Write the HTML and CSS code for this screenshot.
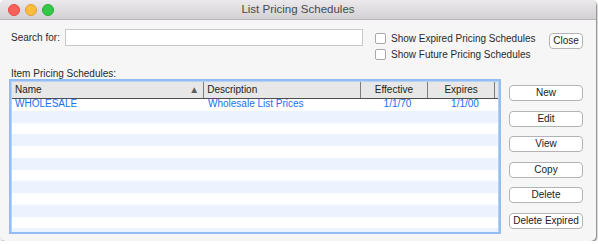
FILE: index.html
```html
<!DOCTYPE html>
<html>
<head>
<meta charset="utf-8">
<link rel="stylesheet" href="styles.css">
</head>
<body>
<div class="window">
  <div class="titlebar">
    <div class="lights">
      <span class="light red"></span>
      <span class="light yellow"></span>
      <span class="light green"></span>
    </div>
    <div class="title">List Pricing Schedules</div>
  </div>
  <div class="content">
    <div class="toprow">
      <label class="search-label">Search for:</label>
      <div class="search-input"></div>
      <div class="checks">
        <div class="check"><span class="box"></span><span>Show Expired Pricing Schedules</span></div>
        <div class="check"><span class="box"></span><span>Show Future Pricing Schedules</span></div>
      </div>
      <div class="btn close">Close</div>
    </div>
    <div class="section-label">Item Pricing Schedules:</div>
    <div class="mainrow">
      <div class="table">
        <div class="thead">
          <div class="th c-name">Name<span class="sort">&#9650;</span></div>
          <div class="th c-desc">Description</div>
          <div class="th c-eff center">Effective</div>
          <div class="th c-exp center">Expires</div>
          <div class="th c-rest"></div>
        </div>
        <div class="tbody">
          <div class="tr"><div class="td c-name">WHOLESALE</div><div class="td c-desc">Wholesale List Prices</div><div class="td c-eff center">1/1/70</div><div class="td c-exp center">1/1/00</div></div>
          <div class="tr"></div>
          <div class="tr"></div>
          <div class="tr"></div>
          <div class="tr"></div>
          <div class="tr"></div>
          <div class="tr"></div>
          <div class="tr"></div>
          <div class="tr"></div>
          <div class="tr"></div>
          <div class="tr"></div>
          <div class="tr"></div>
        </div>
      </div>
      <div class="buttons">
        <div class="btn side">New</div>
        <div class="btn side">Edit</div>
        <div class="btn side">View</div>
        <div class="btn side">Copy</div>
        <div class="btn side">Delete</div>
        <div class="btn side">Delete Expired</div>
      </div>
    </div>
  </div>
</div>
</body>
</html>
```
FILE: styles.css
```css
* { box-sizing: border-box; }
html, body {
  margin: 0;
  padding: 0;
  background: #ffffff;
  font-family: "Liberation Sans", Arial, sans-serif;
  font-size: 10px;
  color: #262626;
}
.window {
  width: 596px;
  height: 241px;
  background: #f6f6f6;
  border-radius: 5px 5px 5px 5px;
  box-shadow: 1px 1px 2px rgba(0,0,0,0.55);
  overflow: hidden;
  display: flex;
  flex-direction: column;
}
.titlebar {
  height: 20px;
  flex: none;
  background: linear-gradient(#ebe9eb, #d3d1d3);
  border-bottom: 1px solid #b9b7b9;
  display: flex;
  align-items: center;
  position: relative;
}
.lights {
  display: flex;
  gap: 5px;
  padding-left: 8px;
}
.light {
  width: 12px;
  height: 12px;
  border-radius: 50%;
  display: block;
}
.red { background: #fc605b; border: 1px solid #de4a44; }
.yellow { background: #fdbc40; border: 1px solid #de9f33; }
.green { background: #34c84a; border: 1px solid #27aa36; }
.title {
  position: absolute;
  left: 0;
  right: 0;
  text-align: center;
  font-size: 11.5px;
  color: #4a4a4a;
  top: 3px;
}
.content {
  flex: 1;
  display: flex;
  flex-direction: column;
}
.toprow {
  display: flex;
  align-items: flex-start;
  padding: 9px 13px 0 11px;
}
.search-label {
  width: 54px;
  line-height: 17px;
  color: #2a2a2a;
}
.search-input {
  width: 298px;
  height: 17px;
  background: #fff;
  border: 1px solid #c9c9c9;
}
.checks {
  margin-left: 12px;
  padding-top: 4px;
  display: flex;
  flex-direction: column;
  gap: 5px;
}
.check {
  display: flex;
  align-items: center;
  gap: 5px;
  height: 11px;
  color: #2a2a2a;
}
.box {
  width: 11px;
  height: 11px;
  border: 1px solid #a9a9a9;
  border-radius: 2px;
  background: #fff;
  display: block;
}
.btn {
  background: #fff;
  border: 1px solid #b3b3b3;
  border-radius: 4px;
  text-align: center;
  color: #222;
  height: 16px;
  line-height: 14px;
}
.close {
  margin-left: auto;
  margin-top: 4px;
  width: 34px;
}
.section-label {
  margin-top: 9px;
  padding-left: 11px;
  height: 10px;
  line-height: 10px;
  color: #2a2a2a;
}
.mainrow {
  display: flex;
  padding-left: 9px;
}
.table {
  width: 492px;
  height: 155px;
  border: 2px solid #93bdf4;
  background: #fff;
  overflow: hidden;
  display: flex;
  flex-direction: column;
  box-shadow: inset 0 0 0 1px #b8d2f2;
}
.thead {
  display: flex;
  height: 17px;
  flex: none;
  margin: 1px 1px 0 1px;
  background: #e7e7e7;
  border-bottom: 1px solid #4e4e4e;
}
.th {
  height: 100%;
  line-height: 16px;
  padding-left: 3px;
  border-right: 1px solid #7d7d7d;
  color: #222;
  position: relative;
}
.th.c-rest { border-right: none; flex: 1; }
.c-name { width: 193px; }
.c-desc { width: 157px; }
.c-eff { width: 68px; }
.c-exp { width: 67px; }
.center { text-align: center; padding-left: 0; }
.sort {
  position: absolute;
  right: 4px;
  top: 0;
  font-size: 10px;
  color: #5e5e5e;
}
.tbody {
  margin: 0 1px;
}
.tr {
  height: 11.75px;
  display: flex;
  color: #1a6ff2;
  line-height: 9px;
}
.tr:nth-child(even) { background: #edf3fe; }
.td { padding-left: 3px; }
.buttons {
  margin-left: 8px;
  margin-top: 6px;
  display: flex;
  flex-direction: column;
  gap: 9.5px;
}
.btn.side { width: 74px; }
```
